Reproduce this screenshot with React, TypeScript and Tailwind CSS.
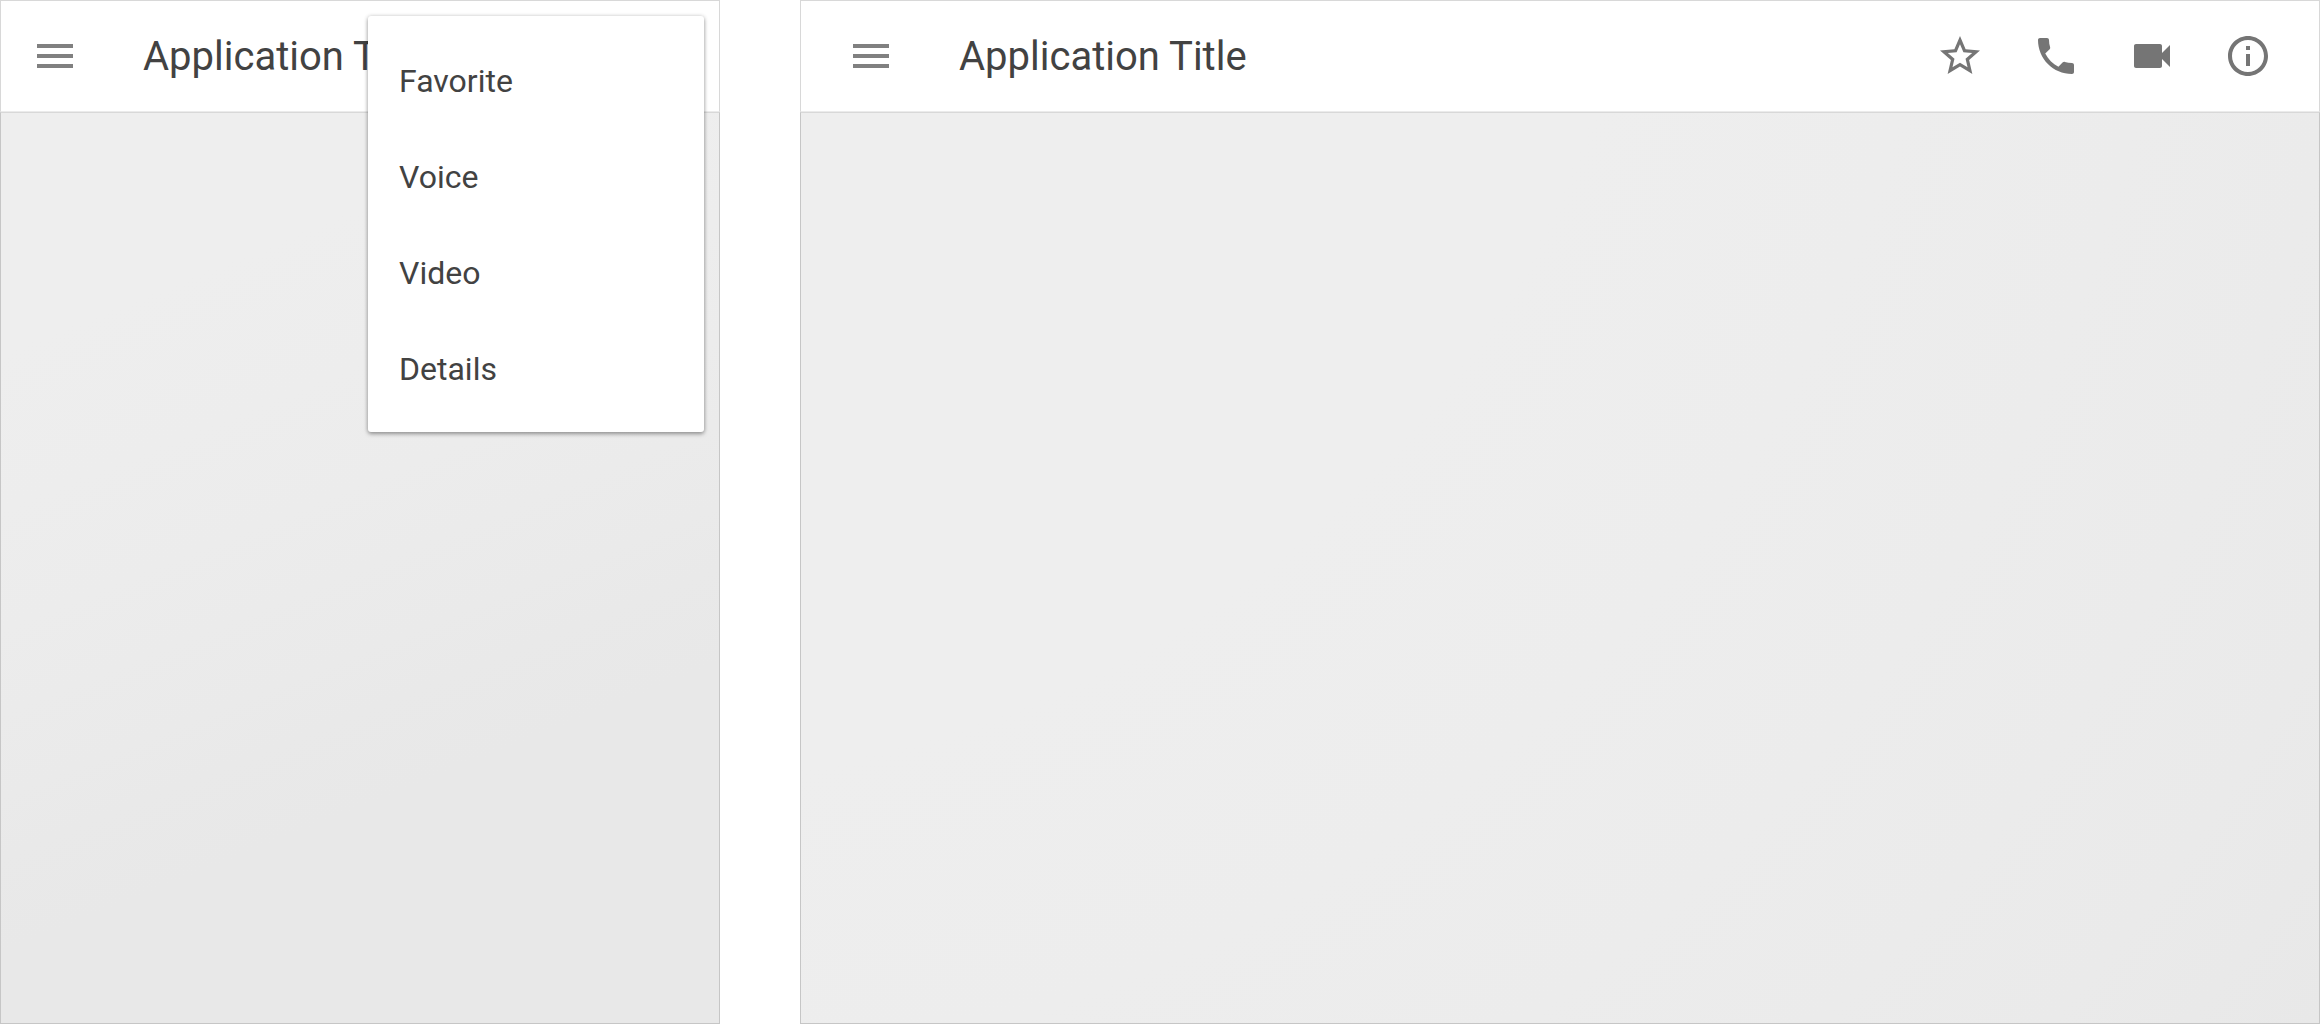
const iconPaths = {
  menu: "M3 18h18v-2H3v2zm0-5h18v-2H3v2zm0-7v2h18V6H3z",
  star: "M22 9.24l-7.19-.62L12 2 9.19 8.63 2 9.24l5.46 4.73L5.82 21 12 17.27 18.18 21l-1.63-7.03L22 9.24zM12 15.4l-3.76 2.27 1-4.28-3.32-2.88 4.38-.38L12 6.1l1.71 4.04 4.38.38-3.32 2.88 1 4.28L12 15.4z",
  phone:
    "M6.62 10.79c1.44 2.83 3.76 5.14 6.59 6.59l2.2-2.2c.27-.27.67-.36 1.02-.24 1.12.37 2.33.57 3.57.57.55 0 1 .45 1 1V20c0 .55-.45 1-1 1-9.39 0-17-7.61-17-17 0-.55.45-1 1-1h3.5c.55 0 1 .45 1 1 0 1.25.2 2.45.57 3.57.11.35.03.74-.25 1.02l-2.2 2.2z",
  video:
    "M17 10.5V7c0-.55-.45-1-1-1H4c-.55 0-1 .45-1 1v10c0 .55.45 1 1 1h12c.55 0 1-.45 1-1v-3.5l4 4v-11l-4 4z",
  info: "M11 17h2v-6h-2v6zm1-15C6.48 2 2 6.48 2 12s4.48 10 10 10 10-4.48 10-10S17.52 2 12 2zm0 18c-4.41 0-8-3.59-8-8s3.59-8 8-8 8 3.59 8 8-3.59 8-8 8zM11 9h2V7h-2v2z",
};

type IconName = keyof typeof iconPaths;

function IconButton({ icon, label }: { icon: IconName; label: string }) {
  return (
    <button type="button" aria-label={label} className="shrink-0 cursor-pointer">
      <svg
        viewBox="0 0 24 24"
        aria-hidden="true"
        className={icon === "menu" ? "size-12 fill-[#808080]" : "size-12 fill-[#757575]"}
      >
        <path d={iconPaths[icon]} />
      </svg>
    </button>
  );
}

function Title() {
  return (
    <h1 className="truncate pt-0.5 text-[40px] leading-12 text-[#424242]">
      Application Title
    </h1>
  );
}

const menuItems = ["Favorite", "Voice", "Video", "Details"];

function OverflowMenu() {
  return (
    <ul
      role="menu"
      className="absolute top-4 right-4 w-[336px] rounded-[3px] bg-white py-4 shadow-[0_2px_4px_rgba(0,0,0,0.35),0_0_4px_rgba(0,0,0,0.14)]"
    >
      {menuItems.map((item) => (
        <li key={item} role="none">
          <button
            type="button"
            role="menuitem"
            className="flex h-24 w-full cursor-pointer items-center px-[31px] pt-0.5 text-left text-[32px] text-[#424242]"
          >
            {item}
          </button>
        </li>
      ))}
    </ul>
  );
}

export default function App() {
  return (
    <div className="flex min-h-screen gap-20 bg-white font-[Roboto,sans-serif]">
      <section className="relative flex min-w-0 flex-[9] flex-col">
        <header className="flex h-28 items-center gap-16 border border-[#d8d8d8] border-b-[#ebebeb] pr-8 pl-[30px]">
          <IconButton icon="menu" label="Open navigation" />
          <Title />
        </header>
        <main className="flex-1 border border-[#c6c6c6] border-t-[#d8d8d8] bg-[linear-gradient(158deg,#eeeeee_20%,#ededed_33%,#ececec_43%,#ebebeb_50%,#eaeaea_57%,#e9e9e9_62%,#e8e8e8_70%)]" />
        <OverflowMenu />
      </section>

      <section className="flex min-w-0 flex-[19] flex-col">
        <header className="flex h-28 items-center gap-16 border border-[#d8d8d8] border-b-[#ebebeb] pr-[47px] pl-[46px]">
          <IconButton icon="menu" label="Open navigation" />
          <Title />
          <div className="ml-auto flex gap-12">
            <IconButton icon="star" label="Favorite" />
            <IconButton icon="phone" label="Voice" />
            <IconButton icon="video" label="Video" />
            <IconButton icon="info" label="Details" />
          </div>
        </header>
        <main className="flex-1 border border-[#c6c6c6] border-t-[#d8d8d8] bg-[radial-gradient(circle_farthest-corner_at_-10%_-37%,#eeeeee_48%,#ededed_62%,#ececec_73%,#ebebeb_82%,#eaeaea_90%,#e8e8e8_100%)]" />
      </section>
    </div>
  );
}
